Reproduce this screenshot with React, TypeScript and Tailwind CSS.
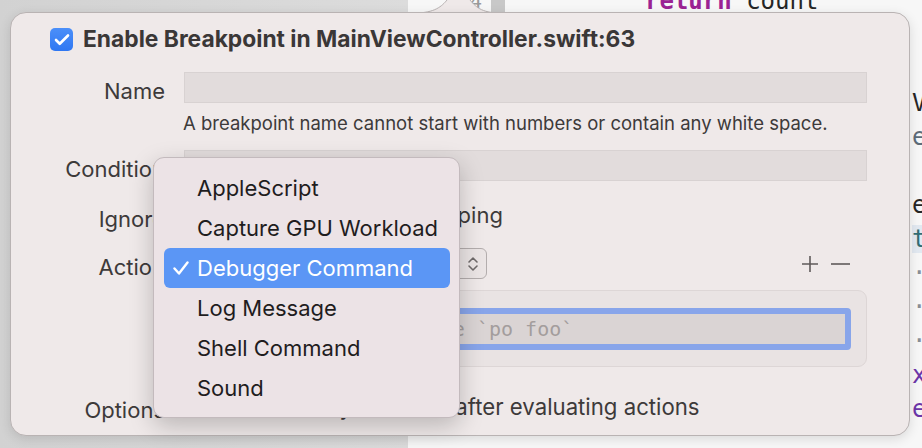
import { Check } from "lucide-react";

const menuItems = [
  "AppleScript",
  "Capture GPU Workload",
  "Debugger Command",
  "Log Message",
  "Shell Command",
  "Sound",
];

// lines of the editor behind the popover; only the edges show
const codeLines = [
  { num: "64", pad: "pl-[140px]", text: "return", rest: " count", color: "text-[#9b2393] font-bold" },
  { num: "65", pad: "pl-[407px]", text: "", rest: "", color: "" },
  { num: "66", pad: "pl-[407px]", text: "", rest: "", color: "" },
  { num: "67", pad: "pl-[407px]", text: "V", rest: "", color: "text-[#262626]" },
  { num: "68", pad: "pl-[407px]", text: "e", rest: "", color: "text-[#5d6c79]" },
  { num: "69", pad: "pl-[407px]", text: "", rest: "", color: "" },
  { num: "70", pad: "pl-[407px]", text: "e", rest: "", color: "text-[#262626]" },
  { num: "71", pad: "pl-[407px]", text: "t", rest: "", color: "text-[#326d74] bg-[#e2e9f1]" },
  { num: "72", pad: "pl-[407px]", text: "·", rest: "", color: "text-[#8a8f96]" },
  { num: "73", pad: "pl-[407px]", text: "·", rest: "", color: "text-[#8a8f96]" },
  { num: "74", pad: "pl-[407px]", text: "·", rest: "", color: "text-[#8a8f96]" },
  { num: "75", pad: "pl-[407px]", text: "x", rest: "", color: "text-[#6c36a9]" },
  { num: "76", pad: "pl-[407px]", text: "e", rest: "", color: "text-[#6c36a9]" },
];

const FieldLabel = ({ children }: { children: React.ReactNode }) => (
  <div className="w-[115px] shrink-0 text-right mt-[8px] text-[22px] text-[#3d3a3a]">
    {children}
  </div>
);

const App = () => {
  return (
    <div className="relative w-[922px] h-[448px] overflow-hidden bg-[#f6f6f6] font-['Inter',sans-serif]">
      {/* backdrop: navigator on the left, source editor on the right */}
      <div className="flex h-full">
        <div className="w-[408px] shrink-0 bg-gradient-to-r from-[#d2d2d2] to-[#dcdcdc]" />
        <div className="flex-1 bg-[#f7f7f7] flex flex-col -mt-[16px] font-['DejaVu_Sans_Mono',monospace] text-[24px]">
          {codeLines.map((line, i) => (
            <div key={i} className="flex h-[34px] shrink-0 items-center whitespace-pre">
              <div className="w-[83px] shrink-0 text-right pr-[9px] text-[20px] text-[#9a9a9a]">
                {line.num}
              </div>
              <div className={`w-[14px] self-stretch shrink-0 ${i === 0 ? "bg-[#c8c8c8]" : ""}`} />
              <div className={`${line.pad} text-[#262626]`}>
                <span className={line.color}>{line.text}</span>
                {line.rest}
              </div>
            </div>
          ))}
          <div className="flex h-[34px] shrink-0 items-center whitespace-pre mt-[18px] pl-[120px] text-[#262626]">
            let d = fileHandle.read(bk: 1 f: 64, ht: t)
          </div>
        </div>
      </div>

      {/* popover arrow */}
      <svg className="absolute left-[415px] top-0" width="90" height="14" viewBox="0 0 90 14">
        <path d="M0 13 C20 13 27 6 32 0 L55 0 C60 6 66 13 85 13 Z" fill="#efe9e9" />
        <path d="M0 13 C20 13 27 6 32 0 M55 0 C60 6 66 13 85 13" fill="none" stroke="#b8b2b2" strokeWidth="1" />
      </svg>

      {/* breakpoint popover */}
      <div className="absolute left-[10px] top-[12px] w-[900px] h-[424px] rounded-[16px] border border-[#b9b3b3] bg-[#efe9e9] shadow-[0_3px_12px_rgba(0,0,0,0.12)] pl-[39px] pr-[42px] pt-[15px] text-[#3d3a3a]">
        <div className="flex items-center h-[23px] gap-[10px]">
          <div className="w-[23px] h-[23px] rounded-[5px] bg-gradient-to-b from-[#4b8ff9] to-[#2f77f2] flex items-center justify-center">
            <Check size={18} strokeWidth={3.5} className="text-white" />
          </div>
          <div className="text-[22.8px] font-bold text-[#3a3737] whitespace-nowrap">
            Enable Breakpoint in MainViewController.swift:63
          </div>
        </div>

        <div className="mt-[21px] flex flex-col">
          <div className="flex items-center h-[31px] gap-[19px]">
            <FieldLabel>Name</FieldLabel>
            <div className="flex-1 h-full bg-[#e2dcdc] border border-[#d8d2d2]" />
          </div>
          <div className="h-[47px] pl-[133px] pt-[8px] leading-[24px] text-[18.5px] text-[#3d3a3a] whitespace-nowrap">
            A breakpoint name cannot start with numbers or contain any white space.
          </div>

          <div className="flex items-center h-[31px] gap-[19px]">
            <FieldLabel>Condition</FieldLabel>
            <div className="flex-1 h-full bg-[#e2dcdc] border border-[#d8d2d2]" />
          </div>

          <div className="flex items-center h-[32px] gap-[19px] mt-[18px]">
            <FieldLabel>Ignore</FieldLabel>
            <div className="w-[70px] h-[31px] bg-[#e2dcdc] border border-[#d8d2d2] text-[20px] text-right pr-2">
              0
            </div>
            <div className="text-[22px] ml-[3px] mt-[1px]">times before stopping</div>
          </div>

          <div className="flex items-center h-[31px] gap-[19px] mt-[17px]">
            <FieldLabel>Action</FieldLabel>
            <div className="w-[303px] h-[31px] rounded-[6px] border border-[#b3adad] bg-[#ebe5e5] flex items-center justify-between pl-[10px] pr-[7px] text-[20px]">
              <span>Debugger Command</span>
              <svg width="12" height="18" viewBox="0 0 12 18" fill="none" stroke="#6f6a6a" strokeWidth="1.6" strokeLinecap="round" strokeLinejoin="round">
                <path d="M2 7 L6 3 L10 7" />
                <path d="M2 11 L6 15 L10 11" />
              </svg>
            </div>
            <div className="flex-1" />
            <div className="flex items-center gap-[12px] pr-[17px]">
              <svg width="18" height="18" viewBox="0 0 18 18" stroke="#5f5a5a" strokeWidth="1.6">
                <path d="M9 1 V17 M1 9 H17" />
              </svg>
              <svg width="19" height="18" viewBox="0 0 19 18" stroke="#5f5a5a" strokeWidth="1.6">
                <path d="M0 9 H19" />
              </svg>
            </div>
          </div>

          <div className="ml-[134px] mt-[11px] h-[77px] rounded-[9px] border border-[#ddd6d6] bg-[#e9e3e3] pt-[17px] pl-[3px] pr-[15px]">
            <div className="h-[42px] rounded-[4px] border-[6px] border-[#88a5ea] bg-[#dad4d4] flex items-center pl-[6px] font-['DejaVu_Sans_Mono',monospace] text-[20px] text-[#a39d9d] whitespace-nowrap">
              Debugger command, like `po foo`
            </div>
          </div>

          <div className="flex items-center h-[32px] gap-[19px] mt-[23px]">
            <FieldLabel>Options</FieldLabel>
            <div className="w-[20px] h-[20px] rounded-[5px] border border-[#b3adad] bg-[#e6e0e0] shrink-0" />
            <div className="text-[22.2px] -ml-[13px] mt-[1px] whitespace-nowrap">
              Automatically continue after evaluating actions
            </div>
          </div>
        </div>
      </div>

      {/* action popup menu */}
      <div className="absolute left-[153px] top-[157px] w-[307px] h-[261px] rounded-[11px] border border-[#c3babd] bg-[#ece3e6] shadow-[0_8px_24px_rgba(0,0,0,0.22)] pt-[10px] pl-[10px] pr-[9px] flex flex-col">
        {menuItems.map((item) => {
          const selected = item === "Debugger Command";
          return (
            <div
              key={item}
              className={`h-[40px] shrink-0 flex items-center rounded-[6px] text-[22px] ${
                selected ? "bg-[#5b96f5] text-white" : "text-[#1f1d1e]"
              }`}
            >
              <div className="w-[33px] shrink-0 flex justify-center">
                {selected && (
                  <svg width="16" height="14" viewBox="0 0 16 14" fill="none" stroke="white" strokeWidth="2.4" strokeLinecap="round" strokeLinejoin="round">
                    <path d="M1.5 7.5 L6 12.5 L14.5 1.5" />
                  </svg>
                )}
              </div>
              <span>{item}</span>
            </div>
          );
        })}
      </div>
    </div>
  );
};

export default App;
